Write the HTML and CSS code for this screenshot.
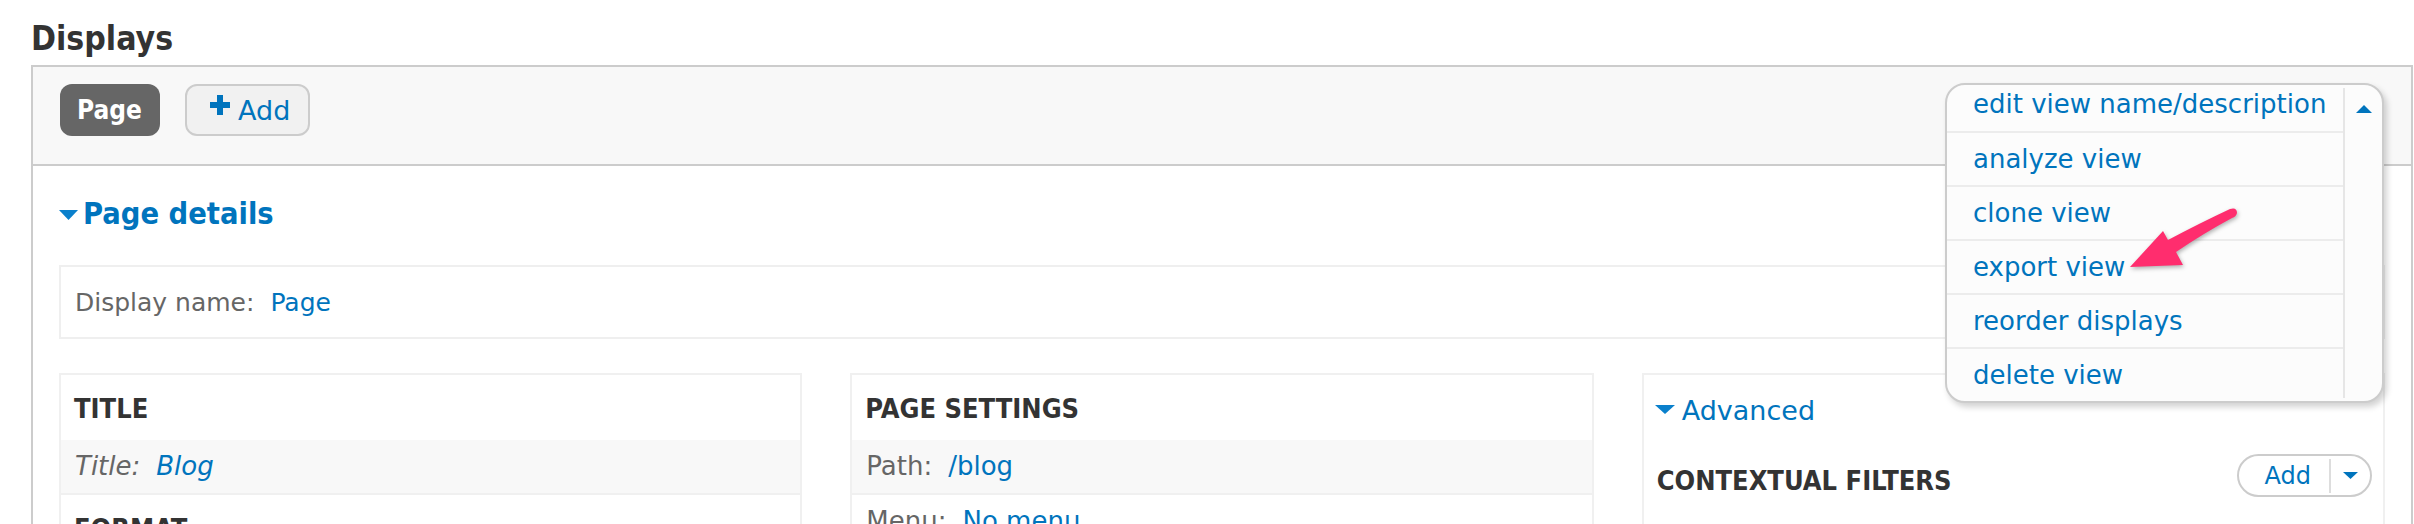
FILE: index.html
```html
<!DOCTYPE html>
<html lang="en">
<head>
<meta charset="utf-8">
<title>Displays</title>
<link rel="stylesheet" href="styles.css">
</head>
<body>
<h2 class="displays-title">Displays</h2>
<div class="displays">
  <div class="display-tabs">
    <span class="tab tab-active">Page</span>
    <span class="tab tab-add"><svg class="plus" width="20" height="20" viewBox="0 0 20 20"><rect x="7" y="0" width="6" height="20" fill="#0074bd"/><rect x="0" y="7" width="20" height="6" fill="#0074bd"/></svg>Add</span>
  </div>
  <div class="display-body">
    <div class="summary summary-main"><svg class="caret" width="19" height="10" viewBox="0 0 19 10"><path d="M0 0H19L9.5 10Z" fill="#0a80cc"/></svg>Page details</div>
    <div class="display-name">Display name:<a class="val">Page</a></div>
    <div class="columns">
      <div class="column">
        <div class="section-head">TITLE</div>
        <div class="row row-shaded"><em>Title:</em><a class="val"><em>Blog</em></a></div>
        <div class="section-head">FORMAT</div>
      </div>
      <div class="column">
        <div class="section-head">PAGE SETTINGS</div>
        <div class="row row-shaded">Path:<a class="val">/blog</a></div>
        <div class="row">Menu:<a class="val">No menu</a></div>
      </div>
      <div class="column">
        <div class="summary summary-adv"><svg class="caret-sm" width="20" height="9" viewBox="0 0 20 9"><path d="M0 0H20L10 9Z" fill="#0a80cc"/></svg>Advanced</div>
        <div class="section-row">
          <div class="section-head section-head-inline">CONTEXTUAL FILTERS</div>
          <div class="dropbutton">
            <span class="db-label">Add</span>
            <span class="db-toggle"><svg width="15" height="7" viewBox="0 0 15 7"><path d="M0 0H15L7.5 7Z" fill="#0074bd"/></svg></span>
          </div>
        </div>
      </div>
    </div>
  </div>
  <div class="view-menu">
    <ul class="view-menu-list">
      <li>edit view name/description</li>
      <li>analyze view</li>
      <li>clone view</li>
      <li>export view</li>
      <li>reorder displays</li>
      <li>delete view</li>
    </ul>
    <div class="view-menu-toggle"><svg width="16" height="8" viewBox="0 0 16 8"><path d="M0 8H16L8 0Z" fill="#0074bd"/></svg></div>
  </div>
  <svg class="callout-arrow" width="125" height="72" viewBox="0 0 125 72"><path d="M12 64 L45 28 L50 37 Q82 20 112 6 Q119 4 119 10 Q118 14 114 15 Q86 30 58 49 L65 62 Z" fill="#ff2d6e"/></svg>
</div>
</body>
</html>
```

FILE: styles.css
```css
html, body {
  margin: 0;
  padding: 0;
  background: #fff;
}

body {
  padding: 0 1px 0 31px;
  font-family: "DejaVu Sans", "Noto Sans", sans-serif;
  font-size: 26px;
  color: #666;
  overflow: hidden;
  height: 524px;
}

a {
  color: #0074bd;
  text-decoration: none;
}

.displays-title {
  margin: 0 0 6px;
  padding-top: 19px;
  font-family: "DejaVu Sans Condensed", "DejaVu Sans", sans-serif;
  font-stretch: semi-condensed;
  font-weight: bold;
  font-size: 33.5px;
  line-height: 40px;
  color: #333;
}

.displays {
  position: relative;
  border: 2px solid #ccc;
}

.display-tabs {
  display: flex;
  align-items: center;
  gap: 25px;
  padding: 17px 27px 28px;
  background: #f8f8f8;
  border-bottom: 2px solid #ccc;
}

.tab {
  display: flex;
  align-items: center;
  height: 52px;
  box-sizing: border-box;
  border-radius: 12px;
  font-size: 26px;
}

.tab-active {
  background: #666;
  color: #fff;
  padding: 0 17px;
  width: 100px;
  font-family: "DejaVu Sans Condensed", "DejaVu Sans", sans-serif;
  font-stretch: semi-condensed;
  font-weight: bold;
}

.tab-add {
  border: 2px solid #ccc;
  background: #f1f1f1;
  color: #0074bd;
  width: 125px;
  padding: 0 0 0 23px;
  font-size: 27px;
}

.plus {
  margin-right: 8px;
  margin-top: -10px;
}

.display-body {
  padding: 28px 26px 0;
}

.summary {
  display: flex;
  align-items: center;
  color: #0074bd;
}

.summary-main {
  font-family: "DejaVu Sans Condensed", "DejaVu Sans", sans-serif;
  font-stretch: semi-condensed;
  font-weight: bold;
  font-size: 30.5px;
  line-height: 40px;
}

.caret {
  margin-right: 5px;
  margin-top: 2px;
}

.display-name {
  margin-top: 31px;
  border: 2px solid #efefef;
  padding: 18px 14px 16px;
  line-height: 36px;
  font-size: 25px;
}

.val {
  margin-left: 16px;
}

.columns {
  margin-top: 34px;
  display: grid;
  grid-template-columns: 1fr 1fr 1fr;
  gap: 48px;
}

.column {
  border: 2px solid #f0f0f0;
  min-height: 300px;
}

.section-head {
  padding: 16px 13px 13px;
  font-family: "DejaVu Sans Condensed", "DejaVu Sans", sans-serif;
  font-stretch: semi-condensed;
  font-weight: bold;
  font-size: 27px;
  line-height: 36px;
  color: #333;
}

.row {
  padding: 8px 14px 9px;
  line-height: 36px;
  border-bottom: 2px solid #f0f0f0;
}

.row-shaded {
  background: #f8f8f8;
}

.summary-adv {
  padding: 18px 11px 0;
  font-size: 27px;
  line-height: 36px;
}

.caret-sm {
  margin-right: 7px;
  margin-top: -4px;
}

.section-row {
  display: flex;
  align-items: flex-start;
  justify-content: space-between;
  margin-top: 34px;
}

.section-head-inline {
  padding: 0 13px;
}

.dropbutton {
  display: flex;
  align-items: center;
  height: 43px;
  box-sizing: border-box;
  margin-top: -9px;
  margin-right: 11px;
  border: 2px solid #ccc;
  border-radius: 22px;
  background: #fff;
}

.db-label {
  padding: 0 18px 0 26px;
  font-size: 24px;
  color: #0074bd;
}

.db-toggle {
  display: flex;
  align-items: center;
  height: 34px;
  padding: 0 12px;
  border-left: 2px solid #ddd;
}

.view-menu {
  position: absolute;
  top: 16px;
  right: 27px;
  z-index: 5;
  width: 439px;
  height: 320px;
  box-sizing: border-box;
  display: flex;
  border: 2px solid #ccc;
  border-radius: 20px;
  background: #fcfcfc;
  box-shadow: 3px 4px 6px rgba(0, 0, 0, 0.18);
  overflow: hidden;
}

.view-menu-list {
  flex: 1;
  margin: 0;
  padding: 0;
  list-style: none;
}

.view-menu-list li {
  height: 54px;
  box-sizing: border-box;
  border-top: 2px solid #ececec;
  padding-left: 26px;
  line-height: 52px;
  font-size: 26px;
  color: #0074bd;
  white-space: nowrap;
}

.view-menu-list li:first-child {
  border-top: 0;
  height: 46px;
  line-height: 38px;
}

.view-menu-toggle {
  width: 39px;
  box-sizing: border-box;
  margin: 3px 0;
  padding-top: 17px;
  border-left: 2px solid #e6e6e6;
  display: flex;
  justify-content: center;
  align-items: flex-start;
}

.callout-arrow {
  position: absolute;
  left: 2085px;
  top: 136px;
  z-index: 6;
  filter: drop-shadow(1px 2px 2px rgba(0, 0, 0, 0.3));
}
```
